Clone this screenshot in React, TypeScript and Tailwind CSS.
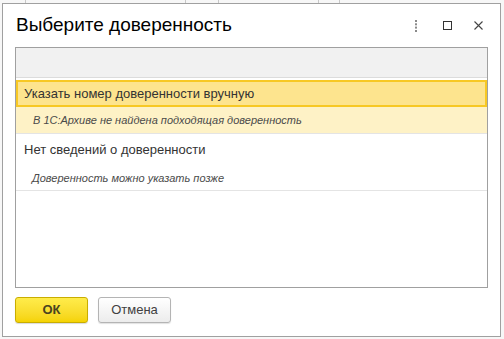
import React from "react";

const font = { fontFamily: '"Liberation Sans", Arial, sans-serif' };

const rows = [
  {
    title: "Указать номер доверенности вручную",
    note: "В 1С:Архиве не найдена подходящая доверенность",
    selected: true,
  },
  {
    title: "Нет сведений о доверенности",
    note: "Доверенность можно указать позже",
    selected: false,
  },
];

// column widths of the spreadsheet peeking out above the dialog
const gridCols = [26, 160, 33, 100, 21];

const MoreIcon = () => (
  <svg width="4" height="12" viewBox="0 0 4 12">
    <rect x="1" y="0" width="2" height="2" fill="#8a8a8a" />
    <rect x="1" y="3.3" width="2" height="2" fill="#8a8a8a" />
    <rect x="1" y="6.6" width="2" height="2" fill="#8a8a8a" />
    <rect x="1" y="10" width="2" height="2" fill="#8a8a8a" />
  </svg>
);

const MaximizeIcon = () => (
  <svg width="9" height="9" viewBox="0 0 9 9">
    <rect x="0.5" y="0.5" width="8" height="8" fill="none" stroke="#333" strokeWidth="1" />
  </svg>
);

const CloseIcon = () => (
  <svg width="9" height="9" viewBox="0 0 9 9">
    <path d="M0.5 0.5 L8.5 8.5 M8.5 0.5 L0.5 8.5" stroke="#444" strokeWidth="1.1" />
  </svg>
);

const Row = ({ title, note, selected }: { title: string; note: string; selected: boolean }) => (
  <div className="border-b border-[#e4e4e4]">
    <div
      className={
        selected
          ? "h-[27px] flex items-center pl-[6px] border-2 border-[#f7c824] bg-[#fde48e] text-[13px] text-[#333]"
          : "h-[32px] flex items-center pl-[8px] text-[13px] text-[#333]"
      }
    >
      {title}
    </div>
    <div
      className={
        selected
          ? "h-[26px] flex items-center pl-[17px] bg-[#fef2c6] text-[11px] italic text-[#4a4a4a]"
          : "h-[24px] flex items-center pl-[16px] text-[11px] italic text-[#4a4a4a]"
      }
    >
      {note}
    </div>
  </div>
);

export default function App() {
  return (
    <div className="w-[504px] h-[339px] bg-[#f7f7f7] overflow-hidden" style={font}>
      <div className="flex h-[3px]">
        {gridCols.map((w, i) => (
          <div key={i} className="h-full border-r border-[#c8c8c8]" style={{ width: w }} />
        ))}
      </div>

      <div className="pl-[2px]">
        <div className="w-[499px] h-[334px] border border-[#a0a0a0] bg-white flex flex-col">
          <div className="h-[43px] flex items-center pl-[13px] pr-[17px]">
            <div className="flex-1 text-[19px] text-black leading-none pb-[2px]">Выберите доверенность</div>
            <div className="flex items-center">
              <MoreIcon />
              <div className="ml-[25px]">
                <MaximizeIcon />
              </div>
              <div className="ml-[22px]">
                <CloseIcon />
              </div>
            </div>
          </div>

          <div className="px-[12px]">
            <div className="h-[241px] border border-[#a0a0a0] bg-white">
              <div className="h-[30px] bg-[#f1f1f1] border-b border-[#dcdcdc]" />
              <div className="pt-[2px]">
                {rows.map((r) => (
                  <Row key={r.title} {...r} />
                ))}
              </div>
            </div>
          </div>

          <div className="flex gap-[10px] px-[12px] mt-[9px]">
            <button className="w-[73px] h-[26px] rounded-[3px] border border-[#c9ad00] bg-gradient-to-b from-[#ffec4a] to-[#f5d300] text-[13px] font-bold text-[#4a4320] shadow-[0_1px_1px_rgba(0,0,0,0.15)]">
              ОК
            </button>
            <button className="w-[73px] h-[26px] rounded-[3px] border border-[#b4b4b4] bg-gradient-to-b from-white to-[#ececec] text-[13px] text-[#404040] shadow-[0_1px_1px_rgba(0,0,0,0.12)]">
              Отмена
            </button>
          </div>
        </div>
      </div>
    </div>
  );
}
